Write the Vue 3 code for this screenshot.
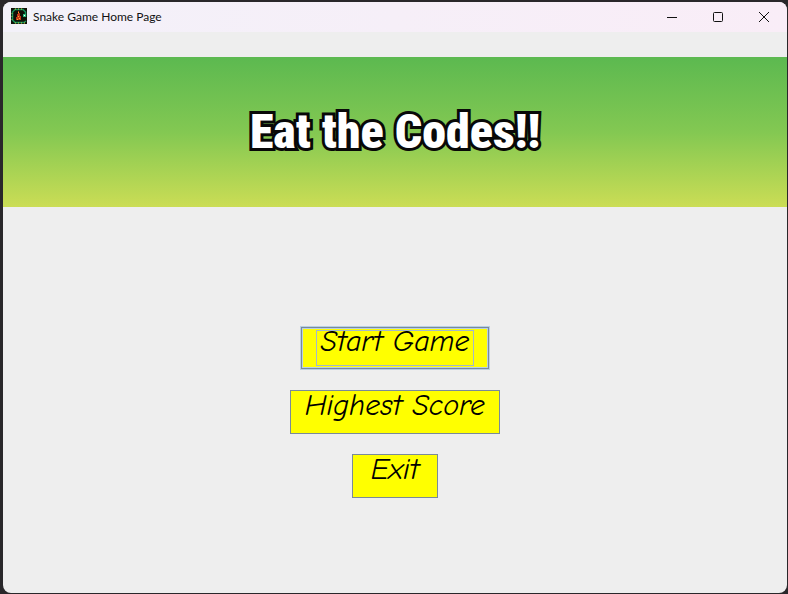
<script setup>
const title = 'Snake Game Home Page'
const actions = [
  { label: 'Start Game', kind: 'start' },
  { label: 'Highest Score', kind: 'score' },
  { label: 'Exit', kind: 'exit' },
]
</script>

<template>
  <div class="desktop">
    <div class="window">
      <header class="titlebar">
        <svg class="app-icon" viewBox="0 0 16 16" aria-hidden="true">
          <rect width="16" height="16" fill="#101208" />
          <path d="M15 13L13 14.5H4L1.5 12V4L4 1.5H12L14.5 4V8H12" fill="none" stroke="#15905a" stroke-width="1.5" />
          <path d="M4 1H13M4 15H14" fill="none" stroke="#d5c83a" stroke-width="1" stroke-dasharray="1 2" />
          <path d="M1 5V12" fill="none" stroke="#8eb83e" stroke-width="1" stroke-dasharray="1 2" />
          <rect x="12" y="6" width="3" height="3" fill="#27b879" />
          <rect x="13" y="7" width="1" height="1" fill="#fff" />
          <path d="M7 3H8V5H9V8H10V12H5V9H6V6H7Z" fill="#c43817" />
          <path d="M7 4H8V5H7ZM7 8H8V9H7ZM8 10H9V11H8ZM6 11H7V12H6Z" fill="#f5ad32" />
        </svg>
        <h1 class="title">{{ title }}</h1>
        <div class="controls">
          <button type="button" class="control" aria-label="Minimize">
            <svg viewBox="0 0 12 12"><path d="M1 6.5H11" /></svg>
          </button>
          <button type="button" class="control" aria-label="Maximize">
            <svg viewBox="0 0 12 12"><rect x="1.5" y="1.5" width="9" height="9" rx="1" /></svg>
          </button>
          <button type="button" class="control" aria-label="Close">
            <svg viewBox="0 0 12 12"><path d="M1 1L11 11M11 1L1 11" /></svg>
          </button>
        </div>
      </header>
      <section class="banner">
        <h2 class="banner-text">Eat the Codes!!</h2>
      </section>
      <main class="menu">
        <button
          v-for="action in actions"
          :key="action.kind"
          type="button"
          class="action"
          :class="action.kind"
        >
          <span class="label">{{ action.label }}</span>
        </button>
      </main>
    </div>
  </div>
</template>

<style>
body {
  margin: 0;
  background: #29272a;
}
</style>

<style scoped>
.desktop {
  box-sizing: border-box;
  display: flex;
  min-height: 100vh;
  padding: 2px 1px 1px 3px;
  background: #29272a;
}
.window {
  flex: 1;
  display: flex;
  flex-direction: column;
  overflow: hidden;
  border-radius: 8px;
  background: #eeeeee;
}
.titlebar {
  display: flex;
  align-items: center;
  height: 30px;
  padding-left: 8px;
  background: linear-gradient(90deg, #f3f1f9, #f9edf7);
}
.app-icon {
  width: 16px;
  height: 16px;
  margin-bottom: 2px;
}
.title {
  flex: 1;
  margin: 0 0 0 6px;
  font: 400 12px/16px "Segoe UI", Lato, "Open Sans", sans-serif;
  color: #111;
}
.controls {
  display: flex;
}
.control {
  display: flex;
  align-items: center;
  justify-content: center;
  width: 46px;
  height: 28px;
  padding: 0;
  border: 0;
  background: transparent;
}
.control svg {
  width: 12px;
  height: 12px;
  fill: none;
  stroke: #111;
  stroke-width: 1;
}
.banner {
  display: flex;
  align-items: center;
  justify-content: center;
  height: 150px;
  margin-top: 25px;
  background: linear-gradient(#5cb950, #83c852 50%, #cbdd55);
}
.banner-text {
  margin: 0;
  font: 900 48px/80px "Roboto Condensed", "Liberation Sans Narrow", sans-serif;
  color: #fff;
  -webkit-text-stroke: 6px #080808;
  paint-order: stroke fill;
  stroke-linejoin: round;
}
.menu {
  display: flex;
  flex-direction: column;
  align-items: center;
  gap: 20px;
  padding: 119px 16px 24px;
}
.action {
  box-sizing: border-box;
  display: flex;
  justify-content: center;
  height: 44px;
  padding: 0;
  border: 1px solid #7a8a99;
  background: #ffff00;
  color: #000;
  font: italic 400 30px/30px "Ink Free", "Segoe Print", "Comic Neue", cursive;
  white-space: nowrap;
}
.label {
  box-sizing: border-box;
  height: 36px;
}
.start {
  align-items: center;
  min-width: 190px;
  border-color: #b8cfe5;
  box-shadow: inset 0 0 0 1px #7a8a99, inset 0 0 0 2px #b8cfe5;
}
.start .label {
  min-width: 158px;
  border: 1px solid #a3b8cc;
  line-height: 22px;
}
.score {
  min-width: 210px;
}
.exit {
  min-width: 86px;
}
</style>
